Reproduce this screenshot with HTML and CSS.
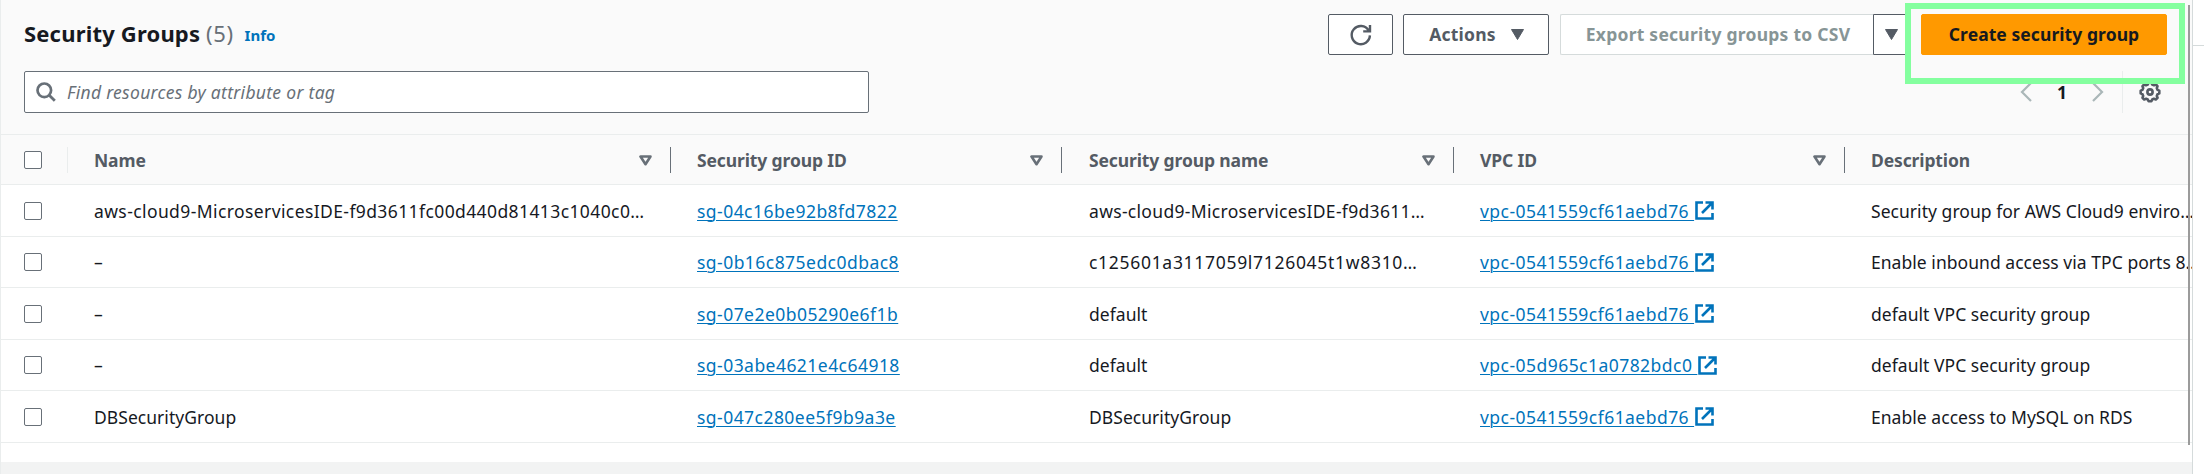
FILE: index.html
```html
<!DOCTYPE html>
<html lang="en">
<head>
<meta charset="utf-8">
<title>Security Groups</title>
<link rel="stylesheet" href="styles.css">
</head>
<body>
<svg class="defs" width="0" height="0">
  <symbol id="ext" viewBox="0 0 19 19"><path d="M8 1.5H1.5V17.5H17.5V12M10.5 1.5H17.5V8.5M17 2L7 12" fill="none" stroke="currentColor" stroke-width="2.6"/></symbol>
  <symbol id="sort" viewBox="0 0 13 11"><path d="M1.5 1.5H11.5L6.5 9.2Z" fill="none" stroke="currentColor" stroke-width="2.6" stroke-linejoin="round"/></symbol>
  <symbol id="down" viewBox="0 0 13 11"><path d="M.5.5H12.5L6.5 10.5Z" fill="currentColor" stroke="currentColor" stroke-linejoin="round"/></symbol>
</svg>
<div class="page">
  <main class="panel">
    <header class="head">
      <div class="top">
        <h1 class="title">Security Groups</h1><span class="count">(5)</span><a class="info">Info</a>
        <div class="actions">
          <button class="btn refresh"><svg width="24" height="24" viewBox="0 0 24 24"><path d="M20.9 12.4A9.1 9.1 0 1 1 19.6 7.4M21 2V8.4H14.2" fill="none" stroke="currentColor" stroke-width="2.4"/></svg></button>
          <button class="btn menu"><span class="t-actions">Actions</span><svg width="13" height="11"><use href="#down"/></svg></button>
          <button class="btn export"><span class="t-export">Export security groups to CSV</span></button>
          <button class="btn more"><svg width="13" height="11"><use href="#down"/></svg></button>
          <button class="btn create"><span class="t-create">Create security group</span></button>
        </div>
      </div>
      <div class="tools">
        <div class="search">
          <svg width="20" height="20" viewBox="0 0 20 20"><circle cx="8.3" cy="8.3" r="6.8" fill="none" stroke="currentColor" stroke-width="2.7"/><path d="M13 13L18.8 18.8" stroke="currentColor" stroke-width="2.8"/></svg>
          <span class="placeholder">Find resources by attribute or tag</span>
        </div>
        <div class="pager">
          <svg class="arrow" width="12" height="20" viewBox="0 0 12 20"><path d="M11 1L2 10L11 19" fill="none" stroke="currentColor" stroke-width="2.2"/></svg>
          <b class="num">1</b>
          <svg class="arrow" width="12" height="20" viewBox="0 0 12 20"><path d="M1 1L10 10L1 19" fill="none" stroke="currentColor" stroke-width="2.2"/></svg>
          <span class="split"></span>
          <svg class="gear" width="22" height="22" viewBox="0 0 22 22"><g fill="none" stroke="currentColor"><circle cx="11" cy="11" r="2.6" stroke-width="2.6"/><path stroke-width="2.6" stroke-linejoin="round" d="M9.6 1.7H12.4L13.2 3.6L15 4.3L16.9 3.5L18.5 5.2L17.8 7.1L18.5 8.9L20.3 9.6V12.4L18.5 13.2L17.8 14.9L18.6 16.8L16.8 18.5L14.9 17.8L13.2 18.5L12.4 20.3H9.6L8.8 18.5L7.1 17.8L5.2 18.5L3.5 16.8L4.2 14.9L3.5 13.2L1.7 12.4V9.6L3.5 8.9L4.2 7.1L3.5 5.2L5.2 3.5L7 4.3L8.8 3.6Z"/></g></svg>
        </div>
      </div>
    </header>
    <div class="row hrow">
      <div class="check"><i class="box"></i></div>
      <div class="cell"><span class="n1">Name</span><svg width="13" height="11"><use href="#sort"/></svg></div>
      <div class="cell"><span class="n2">Security group ID</span><svg width="13" height="11"><use href="#sort"/></svg></div>
      <div class="cell"><span class="n3">Security group name</span><svg width="13" height="11"><use href="#sort"/></svg></div>
      <div class="cell"><span class="n4">VPC ID</span><svg width="13" height="11"><use href="#sort"/></svg></div>
      <div class="cell"><span class="n5">Description</span></div>
    </div>
    <div class="row r52">
      <div class="check"><i class="box"></i></div>
      <div class="cell"><span class="long">aws-cloud9-MicroservicesIDE-f9d3611fc00d440d81413c1040c0…</span></div>
      <div class="cell"><a class="id">sg-04c16be92b8fd7822</a></div>
      <div class="cell"><span class="name">aws-cloud9-MicroservicesIDE-f9d3611…</span></div>
      <div class="cell"><a class="id">vpc-0541559cf61aebd76 </a><svg class="ext" width="19" height="19"><use href="#ext"/></svg></div>
      <div class="cell"><span class="desc">Security group for AWS Cloud9 enviro…</span></div>
    </div>
    <div class="row r51">
      <div class="check"><i class="box"></i></div>
      <div class="cell"><span>–</span></div>
      <div class="cell"><a class="id">sg-0b16c875edc0dbac8</a></div>
      <div class="cell"><span class="code">c125601a3117059l7126045t1w8310…</span></div>
      <div class="cell"><a class="id">vpc-0541559cf61aebd76 </a><svg class="ext" width="19" height="19"><use href="#ext"/></svg></div>
      <div class="cell"><span class="desc">Enable inbound access via TPC ports 8…</span></div>
    </div>
    <div class="row r52">
      <div class="check"><i class="box"></i></div>
      <div class="cell"><span>–</span></div>
      <div class="cell"><a class="id">sg-07e2e0b05290e6f1b</a></div>
      <div class="cell"><span class="desc">default</span></div>
      <div class="cell"><a class="id">vpc-0541559cf61aebd76 </a><svg class="ext" width="19" height="19"><use href="#ext"/></svg></div>
      <div class="cell"><span class="desc">default VPC security group</span></div>
    </div>
    <div class="row r51">
      <div class="check"><i class="box"></i></div>
      <div class="cell"><span>–</span></div>
      <div class="cell"><a class="id">sg-03abe4621e4c64918</a></div>
      <div class="cell"><span class="desc">default</span></div>
      <div class="cell"><a class="id">vpc-05d965c1a0782bdc0 </a><svg class="ext" width="19" height="19"><use href="#ext"/></svg></div>
      <div class="cell"><span class="desc">default VPC security group</span></div>
    </div>
    <div class="row r52">
      <div class="check"><i class="box"></i></div>
      <div class="cell"><span class="desc">DBSecurityGroup</span></div>
      <div class="cell"><a class="id">sg-047c280ee5f9b9a3e</a></div>
      <div class="cell"><span class="desc">DBSecurityGroup</span></div>
      <div class="cell"><a class="id">vpc-0541559cf61aebd76 </a><svg class="ext" width="19" height="19"><use href="#ext"/></svg></div>
      <div class="cell"><span class="desc">Enable access to MySQL on RDS</span></div>
    </div>
    <div class="rest"></div>
    <div class="foot"></div>
  </main>
  <aside class="side"></aside>
  <div class="scrollbar"></div>
  <div class="highlight"></div>
</div>
</body>
</html>
```
FILE: styles.css
```css
* { box-sizing: border-box; }
body { margin: 0; background: #fff; color: #16191f; font: 17.5px/24px "Noto Sans", "Open Sans", sans-serif; }
.defs { position: absolute; }
.page { position: relative; display: flex; width: 2204px; height: 474px; overflow: hidden; }
.panel { width: 2193px; border-left: 1px solid #eaeded; border-right: 1px solid #d5dbdb; overflow: hidden; }
.side { flex: 1; height: 46px; border-bottom: 1px solid #d5dbdb; }
.head { height: 135px; padding: 14px 25px 0 23px; background: #fafafa; border-bottom: 1px solid #eaeded; }
.top { display: flex; height: 41px; align-items: center; white-space: nowrap; }
.title { margin: 0; padding-bottom: 3px; font-size: 22px; line-height: 38px; width: 182px; letter-spacing: .18px; }
.count { padding-bottom: 3px; font-size: 22px; line-height: 38px; color: #687078; letter-spacing: .6px; }
.info { margin-left: 11px; font-size: 15px; font-weight: 700; color: #0073bb; }
.actions { display: flex; margin-left: auto; }
.btn { display: flex; height: 41px; align-items: center; justify-content: center; padding: 0; border: 1px solid #545b64; border-radius: 2px; background: #fff; color: #545b64; font: 700 17.5px/24px "Noto Sans", sans-serif; white-space: nowrap; }
.btn span { padding-bottom: 1px; }
.refresh { width: 65px; margin-right: 10px; }
.menu { width: 146px; margin-right: 11px; padding-left: 1px; gap: 15px; letter-spacing: .2px; }
.export { width: 313px; border-color: #d5dbdb; border-right: 0; border-radius: 2px 0 0 2px; color: #879596; letter-spacing: .25px; padding-left: 2px; }
.more { width: 38px; margin-right: 10px; padding-right: 1px; border-radius: 0 2px 2px 0; }
.create { width: 246px; border-color: #ff9900; background: #ff9900; color: #16191f; letter-spacing: .07px; }
.tools { display: flex; height: 42px; margin-top: 16px; justify-content: space-between; }
.search { display: flex; width: 845px; height: 42px; align-items: center; padding-left: 11px; gap: 11px; border: 1px solid #687078; border-radius: 2px; background: #fff; color: #687078; }
.placeholder { font-style: italic; letter-spacing: .3px; }
.pager { display: flex; align-items: center; margin-right: 6px; color: #545b64; }
.arrow { color: #aab7b8; }
.num { width: 60px; text-align: center; color: #16191f; }
.split { width: 1px; height: 42px; margin: 0 16px 0 18px; background: #eaeded; }
.row { display: grid; grid-template-columns: 67px 603px 391px 392px 391px 1fr; border-bottom: 1px solid #eaeded; background: #fff; white-space: nowrap; }
.r51 { height: 51px; }
.r52 { height: 52px; }
.check { display: flex; align-items: center; padding-left: 23px; }
.box { width: 18px; height: 18px; border: 1px solid #687078; border-radius: 2px; background: #fff; }
.cell { display: flex; min-width: 0; align-items: center; padding-left: 26px; white-space: pre; }
.cell:nth-child(4) { padding-left: 27px; }
.cell a { color: #0073bb; text-decoration: underline; text-underline-offset: 2px; text-decoration-thickness: 1px; }
.long { letter-spacing: .4px; }
.name { letter-spacing: .31px; }
.code { letter-spacing: .7px; }
.id { letter-spacing: .46px; }
.desc { letter-spacing: .04px; }
.ext { margin-left: 1px; color: #0073bb; }
.hrow { height: 50px; background: #fafafa; color: #545b64; font-weight: 700; letter-spacing: -.12px; }
.hrow .check, .hrow .cell { height: 26px; margin-top: 12px; }
.hrow .check { border-right: 1px solid #eaeded; }
.hrow .cell { justify-content: space-between; padding-right: 18px; border-right: 1px solid #687078; }
.hrow .cell:last-child { border-right: 0; }
.hrow .cell span { padding-bottom: 1px; }
.hrow svg { color: #687078; }
.rest { height: 19px; background: #fff; }
.foot { height: 12px; background: #f2f3f3; }
.scrollbar { position: absolute; left: 2188px; top: 5px; width: 2px; height: 440px; background: #9b9b9b; }
.highlight { position: absolute; left: 1905px; top: 3px; width: 280px; height: 81px; border: 6px solid #84ff9f; }
```
